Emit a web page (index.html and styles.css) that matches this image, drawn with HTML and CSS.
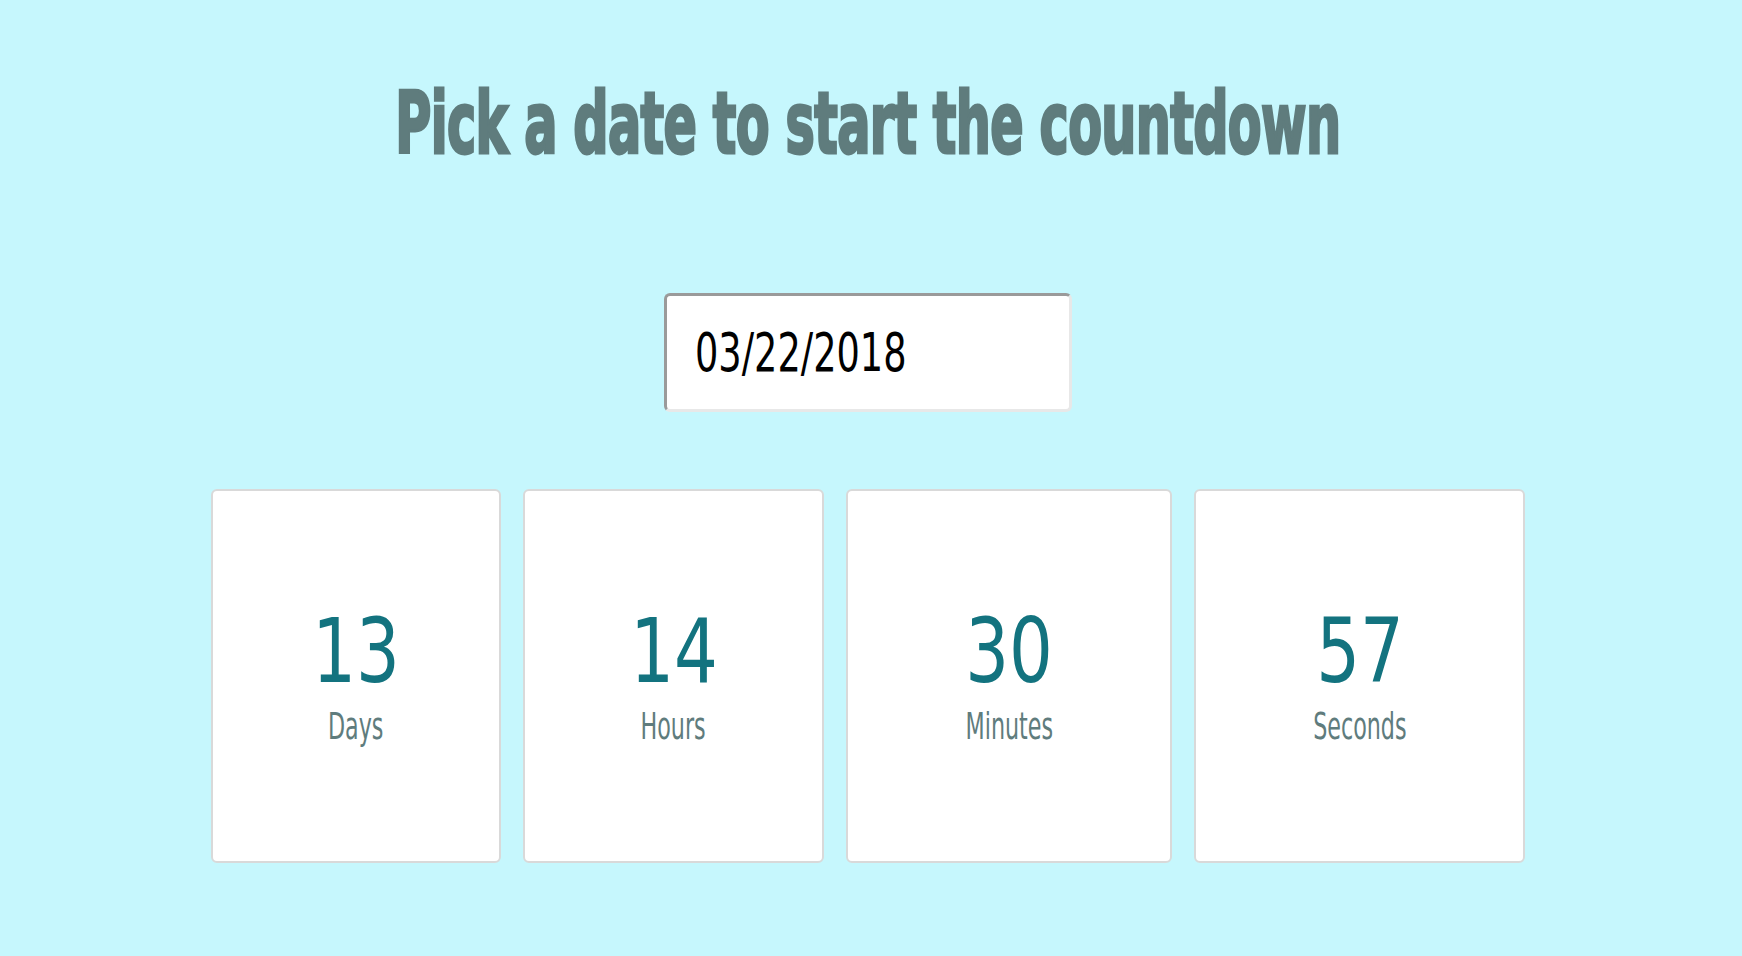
FILE: index.html
```html
<!DOCTYPE html>
<html lang="en">
<head>
<meta charset="utf-8">
<title>Countdown</title>
<link rel="stylesheet" href="styles.css">
</head>
<body>
<main class="page">
  <h1 class="title"><span class="title-text">Pick a date to start the countdown</span></h1>
  <div class="date-field"><span class="date-text">03/22/2018</span></div>
  <section class="timer">
    <div class="card"><div class="num">13</div><div class="label">Days</div></div>
    <div class="card"><div class="num">14</div><div class="label">Hours</div></div>
    <div class="card"><div class="num">30</div><div class="label">Minutes</div></div>
    <div class="card"><div class="num">57</div><div class="label">Seconds</div></div>
  </section>
</main>
</body>
</html>
```
FILE: styles.css
```css
html, body {
  margin: 0;
  padding: 0;
}
body {
  background: #c6f7fd;
  min-height: 956px;
  font-family: "DejaVu Sans Condensed", "DejaVu Sans", sans-serif;
}
.page {
  display: flex;
  flex-direction: column;
  align-items: center;
  padding: 80px 6px 0 0;
}
.title {
  margin: 0;
  font-size: 86px;
  line-height: 1;
  height: 85px;
  font-weight: 700;
  color: #5f7c7d;
  white-space: nowrap;
}
.title-text {
  display: inline-block;
  transform: scaleX(0.637);
  letter-spacing: -1px;
  -webkit-text-stroke: 3px #5f7c7d;
}
.date-field {
  margin-top: 128px;
  box-sizing: border-box;
  width: 408px;
  height: 119px;
  background: #fff;
  border: 3px solid #e8e8e8;
  border-top-color: #9a9a9a;
  border-left-color: #9a9a9a;
  border-radius: 6px;
  padding: 0 28px;
  display: flex;
  align-items: center;
  font-size: 53px;
  color: #000;
}
.date-text {
  display: inline-block;
  transform: scaleX(0.77);
  transform-origin: left center;
  white-space: nowrap;
}
.timer {
  margin-top: 77px;
  display: grid;
  grid-template-columns: 290px 301px 326px 331px;
  gap: 22px;
}
.card {
  box-sizing: border-box;
  height: 374px;
  background: #fff;
  border: 2px solid #d9d9d9;
  border-radius: 6px;
  display: flex;
  flex-direction: column;
  align-items: center;
  justify-content: center;
}
.num {
  display: inline-block;
  font-size: 89px;
  line-height: 1;
  color: #13737f;
  transform: scaleX(0.86);
}
.label {
  display: inline-block;
  margin-top: 11px;
  font-size: 38px;
  line-height: 1;
  color: #5f7c7d;
  transform: scaleX(0.65);
}
```
